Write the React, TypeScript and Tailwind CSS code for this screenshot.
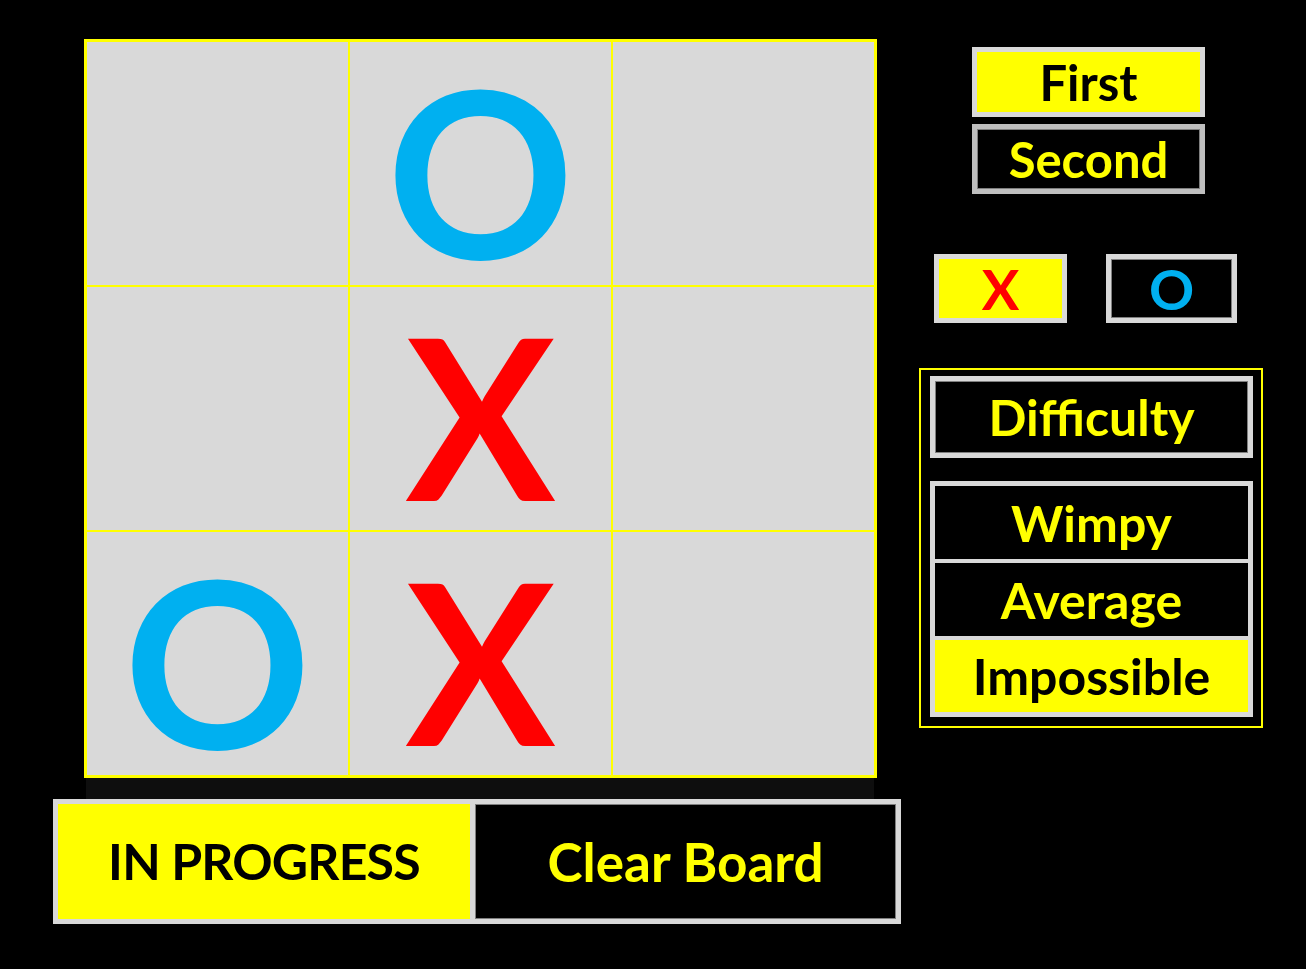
const font = { fontFamily: 'Lato, "Open Sans", sans-serif' }

type Mark = 'X' | 'O' | null

const board: Mark[] = [null, 'O', null, null, 'X', null, 'O', 'X', null]

function Cell({ mark }: { mark: Mark }) {
  return (
    <div className="bg-[#d9d9d9] flex items-center justify-center overflow-hidden">
      {mark === 'O' && (
        <span className="text-[232px] leading-[0.8] font-bold text-[#00b0f0] pt-[12px]">O</span>
      )}
      {mark === 'X' && (
        <span className="text-[224px] leading-[0.8] font-bold text-[#ff0000] pt-[12px]">X</span>
      )}
    </div>
  )
}

export default function App() {
  return (
    <div className="min-h-screen bg-black flex" style={font}>
      {/* Board column */}
      <div className="pt-[39px] pl-[53px] flex flex-col">
        <div className="ml-[31px] w-[793px] h-[739px] bg-[#ffff00] p-[3px] grid grid-cols-3 grid-rows-3 gap-[2px]">
          {board.map((m, i) => (
            <Cell key={i} mark={m} />
          ))}
        </div>
        <div className="ml-[33px] w-[788px] h-[21px] bg-[#0e0e0e]" />
        <div className="w-[848px] h-[125px] border-[5px] border-[#d9d9d9] bg-[#d9d9d9] flex gap-[5px]">
          <div className="w-[412px] bg-[#ffff00] flex items-center justify-center">
            <span className="text-[50px] font-bold text-black tracking-[-0.8px]">IN PROGRESS</span>
          </div>
          <div className="flex-1 bg-black shadow-[inset_0_0_0_1px_#7f7f7f] flex items-center justify-center">
            <span className="text-[53px] font-bold text-[#ffff00]">Clear Board</span>
          </div>
        </div>
      </div>

      {/* Controls column */}
      <div className="ml-[18px] w-[344px] pt-[47px] flex flex-col">
        <button className="ml-[53px] w-[233px] h-[70px] border-[5px] border-[#d9d9d9] bg-[#ffff00] text-black text-[49px] font-bold leading-none flex items-center justify-center">
          First
        </button>
        <button className="ml-[53px] mt-[7px] w-[233px] h-[70px] border-[5px] border-[#bfbfbf] bg-black shadow-[inset_0_0_0_1px_#7f7f7f] text-[#ffff00] text-[49px] font-bold leading-none flex items-center justify-center">
          Second
        </button>

        <div className="ml-[15px] mt-[60px] flex gap-[39px]">
          <button className="w-[133px] h-[69px] border-[5px] border-[#d9d9d9] bg-[#ffff00] text-[#ff0000] text-[56px] font-bold leading-none flex items-center justify-center">
            X
          </button>
          <button className="w-[131px] h-[69px] border-[5px] border-[#d9d9d9] bg-black shadow-[inset_0_0_0_1px_#7f7f7f] text-[#00b0f0] text-[56px] font-bold leading-none flex items-center justify-center">
            O
          </button>
        </div>

        <div className="mt-[45px] w-[344px] h-[360px] border-2 border-[#ffff00] pt-[6px] px-[9px] flex flex-col">
          <div className="w-[323px] h-[82px] border-[5px] border-[#d9d9d9] bg-black shadow-[inset_0_0_0_1px_#7f7f7f] text-[#ffff00] text-[50px] font-bold leading-none flex items-center justify-center">
            Difficulty
          </div>
          <div className="mt-[23px] w-[323px] bg-[#d9d9d9] p-[5px] flex flex-col gap-[4px]">
            <div className="h-[73px] bg-black text-[#ffff00] text-[50px] font-bold leading-none flex items-center justify-center">
              Wimpy
            </div>
            <div className="h-[73px] bg-black text-[#ffff00] text-[50px] font-bold leading-none flex items-center justify-center">
              Average
            </div>
            <div className="h-[72px] bg-[#ffff00] text-black text-[50px] font-bold leading-none flex items-center justify-center">
              Impossible
            </div>
          </div>
        </div>
      </div>
    </div>
  )
}
